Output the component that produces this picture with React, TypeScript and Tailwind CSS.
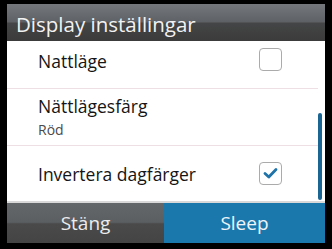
export default function App() {
  const font = "font-['Open_Sans','DejaVu_Sans',sans-serif]";
  const row = "text-[17.5px] font-medium leading-[23px] text-[#151515]";
  return (
    <div className={`w-[332px] h-[249px] bg-black pt-[4px] pl-[7px] pr-[7px] pb-[6px] flex flex-col ${font}`}>
      {/* Header */}
      <div className="h-[37px] shrink-0 flex items-center pt-[4px] pl-[9px] bg-[linear-gradient(to_bottom,#74787d_0%,#5e6165_48%,#444546_52%,#3b3b3b_100%)]">
        <span className="text-[20.5px] font-medium font-stretch-[93%] text-[#f2f2f2] leading-normal whitespace-nowrap">
          Display inställingar
        </span>
      </div>

      {/* Content */}
      <div className="relative flex-1 bg-white flex flex-col">
        {/* Row 1 */}
        <div className="h-[47px] shrink-0 flex items-start justify-between pt-[7px] pl-[31px] pr-[43px]">
          <span className={`mt-[2px] ${row}`}>Nattläge</span>
          <div className="w-[23px] h-[23px] rounded-[4px] border border-[#ababab] bg-white" />
        </div>
        <div className="h-px shrink-0 mr-[7px] bg-[#eddfe3]" />
        {/* Row 2 */}
        <div className="h-[56px] shrink-0 flex flex-col pt-[6px] pl-[31px]">
          <span className={row}>Nättlägesfärg</span>
          <span className="mt-[4px] text-[14px] font-medium leading-[16px] text-[#4a4a4a]">Röd</span>
        </div>
        <div className="h-px shrink-0 mr-[7px] bg-[#eddfe3]" />
        {/* Row 3 */}
        <div className="flex-1 flex items-start justify-between pt-[16px] pl-[31px] pr-[43px] border-b-2 border-[#d9d9d9]">
          <span className={`mt-[1px] ${row}`}>Invertera dagfärger</span>
          <div className="w-[23px] h-[23px] rounded-[4px] border border-[#ababab] bg-white flex items-center justify-center">
            <svg width="21" height="21" viewBox="0 0 21 21">
              <path d="M5 10.5 L8.8 14 L16 6.5" fill="none" stroke="#1f73a8" strokeWidth="2.8" strokeLinecap="round" strokeLinejoin="round" />
            </svg>
          </div>
        </div>
        {/* Scrollbar */}
        <div className="absolute left-[311px] top-[72px] w-[4px] h-[87px] rounded-full bg-[#1b6592]" />
      </div>

      {/* Footer */}
      <div className="h-[40px] shrink-0 grid grid-cols-[157px_1fr]">
        <div className="flex items-center justify-center bg-[linear-gradient(to_bottom,#64676a_0%,#5c5f62_48%,#4a4a4a_52%,#444444_100%)]">
          <span className="text-[19px] font-medium font-stretch-[92%] leading-[23px] text-[#ececec]">Stäng</span>
        </div>
        <div className="flex items-center justify-center bg-[#1b78ad]">
          <span className="text-[19px] font-medium font-stretch-[92%] leading-[23px] text-[#eef4f8]">Sleep</span>
        </div>
      </div>
    </div>
  );
}
